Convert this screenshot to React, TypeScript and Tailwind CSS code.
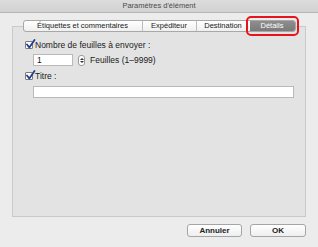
const font = { fontFamily: '"Liberation Sans", Arial, sans-serif' };

const Check = () => (
  <span className="w-[8px] h-[8px] border border-[#7d7d7d] bg-white rounded-[1px] relative shrink-0">
    <svg className="absolute -top-[3px] -left-[1px]" width="11" height="11" viewBox="0 0 11 11">
      <path d="M2 5.5 L4.3 8.5 L9.5 1" fill="none" stroke="#1d3f8f" strokeWidth="1.8" strokeLinecap="round" strokeLinejoin="round" />
    </svg>
  </span>
);

const tabs = [
  { label: 'Étiquettes et commentaires', w: 'w-[118px]' },
  { label: 'Expéditeur', w: 'w-[54px]' },
  { label: 'Destination', w: 'w-[54px]' },
];

export default function App() {
  return (
    <div className="w-[318px] h-[247px] bg-[#ececec] flex flex-col text-[#1a1a1a] overflow-hidden" style={font}>
      {/* title bar */}
      <div className="h-[13px] shrink-0 bg-gradient-to-b from-[#dcdcdc] to-[#d2d2d2] border-b border-[#b5b5b5] flex items-center justify-center text-[7.5px] text-[#4a4a4a]">
        Paramètres d'élément
      </div>

      {/* tabs */}
      <div className="flex justify-center mt-[7px] relative z-10 h-[12px]">
        <div className="flex h-[12px] border border-[#a8a8a8] rounded-[3px] bg-gradient-to-b from-white to-[#f0f0f0] text-[7.5px]">
          {tabs.map((t, i) => (
            <div
              key={t.label}
              className={`${t.w} flex items-center justify-center ${i > 0 ? 'border-l border-[#bdbdbd]' : ''}`}
            >
              {t.label}
            </div>
          ))}
          <div className="w-[45px] relative flex items-center justify-center bg-gradient-to-b from-[#8e8e8e] to-[#7a7a7a] text-white rounded-r-[2px]">
            Détails
            <span className="absolute -left-[4px] -right-[4px] -top-[5px] -bottom-[5px] border-[2px] border-[#e8141c] rounded-[5px]" />
          </div>
        </div>
      </div>

      {/* panel */}
      <div className="mx-[12px] -mt-[6px] h-[191px] bg-[#e3e3e3] border border-[#c9c9c9] pt-[14px] pl-[12px] pr-[11px] flex flex-col text-[8.5px]">
        <div className="flex items-center gap-[2px] h-[8px]">
          <Check />
          <span>Nombre de feuilles à envoyer :</span>
        </div>
        <div className="flex items-center mt-[5px] pl-[8px] h-[12px]">
          <div className="w-[40px] h-[12px] bg-white border border-[#b9b9b9] flex items-center pl-[3px]">1</div>
          <div className="ml-[5px] w-[7px] h-[11px] bg-white border border-[#9a9a9a] rounded-[3px] flex flex-col items-center justify-center gap-[1px]">
            <span className="w-0 h-0 border-l-[2px] border-r-[2px] border-b-[2px] border-l-transparent border-r-transparent border-b-[#333]" />
            <span className="w-0 h-0 border-l-[2px] border-r-[2px] border-t-[2px] border-l-transparent border-r-transparent border-t-[#333]" />
          </div>
          <span className="ml-[5px]">Feuilles (1–9999)</span>
        </div>
        <div className="flex items-center gap-[2px] h-[8px] mt-[6px]">
          <Check />
          <span>Titre :</span>
        </div>
        <div className="mt-[6px] ml-[8px] h-[12px] bg-white border border-[#b9b9b9]" />
      </div>

      {/* buttons */}
      <div className="flex justify-end gap-[8px] pr-[12px] mt-[7px]">
        <button className="w-[55px] h-[13px] rounded-[3px] border border-[#a5a5a5] bg-gradient-to-b from-white to-[#eeeeee] text-[8px] font-bold text-[#222] flex items-center justify-center">
          Annuler
        </button>
        <button className="w-[56px] h-[13px] rounded-[3px] border border-[#a5a5a5] bg-gradient-to-b from-white to-[#eeeeee] text-[8px] font-bold text-[#222] flex items-center justify-center">
          OK
        </button>
      </div>
    </div>
  );
}
